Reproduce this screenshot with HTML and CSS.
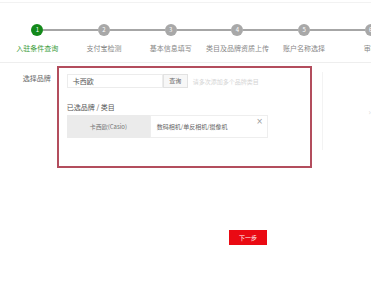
FILE: index.html
```html
<!DOCTYPE html>
<html lang="zh-CN">
<head>
    <meta charset="UTF-8">
    <title>入驻条件查询</title>
    <link rel="stylesheet" href="styles.css">
</head>
<body>
    <div class="page">
        <div class="steps">
            <div class="step active">
                <div class="track"><span class="seg none"></span><span class="dot">1</span><span class="seg"></span></div>
                <div class="step-name">入驻条件查询</div>
            </div>
            <div class="step">
                <div class="track"><span class="seg"></span><span class="dot">2</span><span class="seg"></span></div>
                <div class="step-name">支付宝检测</div>
            </div>
            <div class="step">
                <div class="track"><span class="seg"></span><span class="dot">3</span><span class="seg"></span></div>
                <div class="step-name">基本信息填写</div>
            </div>
            <div class="step">
                <div class="track"><span class="seg"></span><span class="dot">4</span><span class="seg"></span></div>
                <div class="step-name">类目及品牌资质上传</div>
            </div>
            <div class="step">
                <div class="track"><span class="seg"></span><span class="dot">5</span><span class="seg"></span></div>
                <div class="step-name">账户名称选择</div>
            </div>
            <div class="step">
                <div class="track"><span class="seg"></span><span class="dot">6</span><span class="seg"></span></div>
                <div class="step-name">审核</div>
            </div>
        </div>

        <div class="main">
            <div class="form-row">
                <div class="form-label">选择品牌</div>
                <div class="mark-box">
                    <div class="search">
                        <div class="search-input">卡西欧</div>
                        <div class="search-btn">查询</div>
                        <div class="hint">请多次添加多个品牌类目</div>
                    </div>
                    <div class="chosen-title">已选品牌 / 类目</div>
                    <div class="chosen-row">
                        <div class="chosen-brand">卡西欧(Casio)</div>
                        <div class="chosen-cat">
                            <span>数码相机/单反相机/摄像机</span>
                            <span class="remove">×</span>
                        </div>
                    </div>
                </div>
                <div class="side">
                    <span class="side-arrow">›</span>
                </div>
            </div>
            <div class="actions">
                <button class="next-btn">下一步</button>
            </div>
        </div>
    </div>
</body>
</html>
```

FILE: styles.css
```css
body {
    margin: 0;
    background-color: #fff;
    font-family: "Noto Sans CJK SC", "Liberation Sans", sans-serif;
    color: #333;
    overflow: hidden;
}
.page {
    width: 371px;
    height: 280px;
    border-top: 1px solid #f2f2f2;
    margin-top: 2px;
    box-sizing: border-box;
    overflow: hidden;
}
.steps {
    display: flex;
    padding: 21px 0 0 4px;
    height: 60px;
    box-sizing: border-box;
    border-bottom: 1px solid #eee;
    width: 420px;
}
.step {
    width: 66.7px;
    flex-shrink: 0;
    display: flex;
    flex-direction: column;
    align-items: center;
}
.track {
    display: flex;
    align-items: center;
    width: 100%;
}
.seg {
    flex: 1;
    height: 2px;
    background-color: #a6a6a6;
}
.seg.none {
    background-color: transparent;
}
.dot {
    width: 12px;
    height: 12px;
    border-radius: 50%;
    background-color: #a8a8a8;
    color: #fff;
    font-size: 6px;
    line-height: 12px;
    text-align: center;
}
.step.active .dot {
    background-color: #13891a;
}
.step-name {
    margin-top: 7px;
    font-size: 7px;
    color: #888;
    white-space: nowrap;
}
.step.active .step-name {
    color: #3a9c3a;
}
.main {
    padding-top: 3px;
}
.form-row {
    display: flex;
}
.form-label {
    width: 52px;
    padding-top: 7px;
    font-size: 7px;
    color: #666;
    text-align: right;
    box-sizing: border-box;
    padding-right: 1px;
}
.mark-box {
    margin-left: 5px;
    width: 256px;
    height: 102px;
    border: 2px solid #b34d5d;
    box-sizing: border-box;
    padding: 6px 0 0 8px;
}
.search {
    display: flex;
    align-items: center;
}
.search-input {
    width: 96px;
    height: 14px;
    border: 1px solid #ececec;
    box-sizing: border-box;
    font-size: 7px;
    line-height: 12px;
    padding-left: 5px;
    color: #555;
}
.search-btn {
    width: 25px;
    height: 14px;
    border: 1px solid #e2e2e2;
    background-color: #f7f7f7;
    box-sizing: border-box;
    font-size: 6px;
    line-height: 12px;
    text-align: center;
    color: #666;
}
.hint {
    margin-left: 5px;
    font-size: 6px;
    color: #d4d4d4;
}
.chosen-title {
    margin-top: 14px;
    font-size: 7px;
    color: #555;
}
.chosen-row {
    display: flex;
    margin-top: 3px;
    height: 23px;
}
.chosen-brand {
    width: 83px;
    background-color: #ebebeb;
    font-size: 6px;
    color: #777;
    text-align: center;
    line-height: 23px;
}
.chosen-cat {
    width: 118px;
    border: 1px solid #eee;
    box-sizing: border-box;
    display: flex;
    justify-content: space-between;
    font-size: 6px;
    color: #666;
    padding: 0 4px 0 6px;
    line-height: 21px;
}
.remove {
    font-family: "DejaVu Sans", sans-serif;
    font-size: 8px;
    line-height: 12px;
    color: #999;
}
.side {
    margin: 6px 0 0 10px;
    width: 48px;
    height: 78px;
    border-left: 1px solid #f3f3f3;
    display: flex;
    justify-content: flex-end;
    align-items: center;
}
.side-arrow {
    font-size: 8px;
    color: #d8d8d8;
}
.actions {
    margin-top: 53px;
    padding-left: 229px;
}
.next-btn {
    width: 38px;
    height: 15px;
    border: none;
    background-color: #ea0a13;
    color: #fff;
    font-family: "Noto Sans CJK SC", sans-serif;
    font-size: 6px;
    padding: 0;
    cursor: pointer;
}
```
